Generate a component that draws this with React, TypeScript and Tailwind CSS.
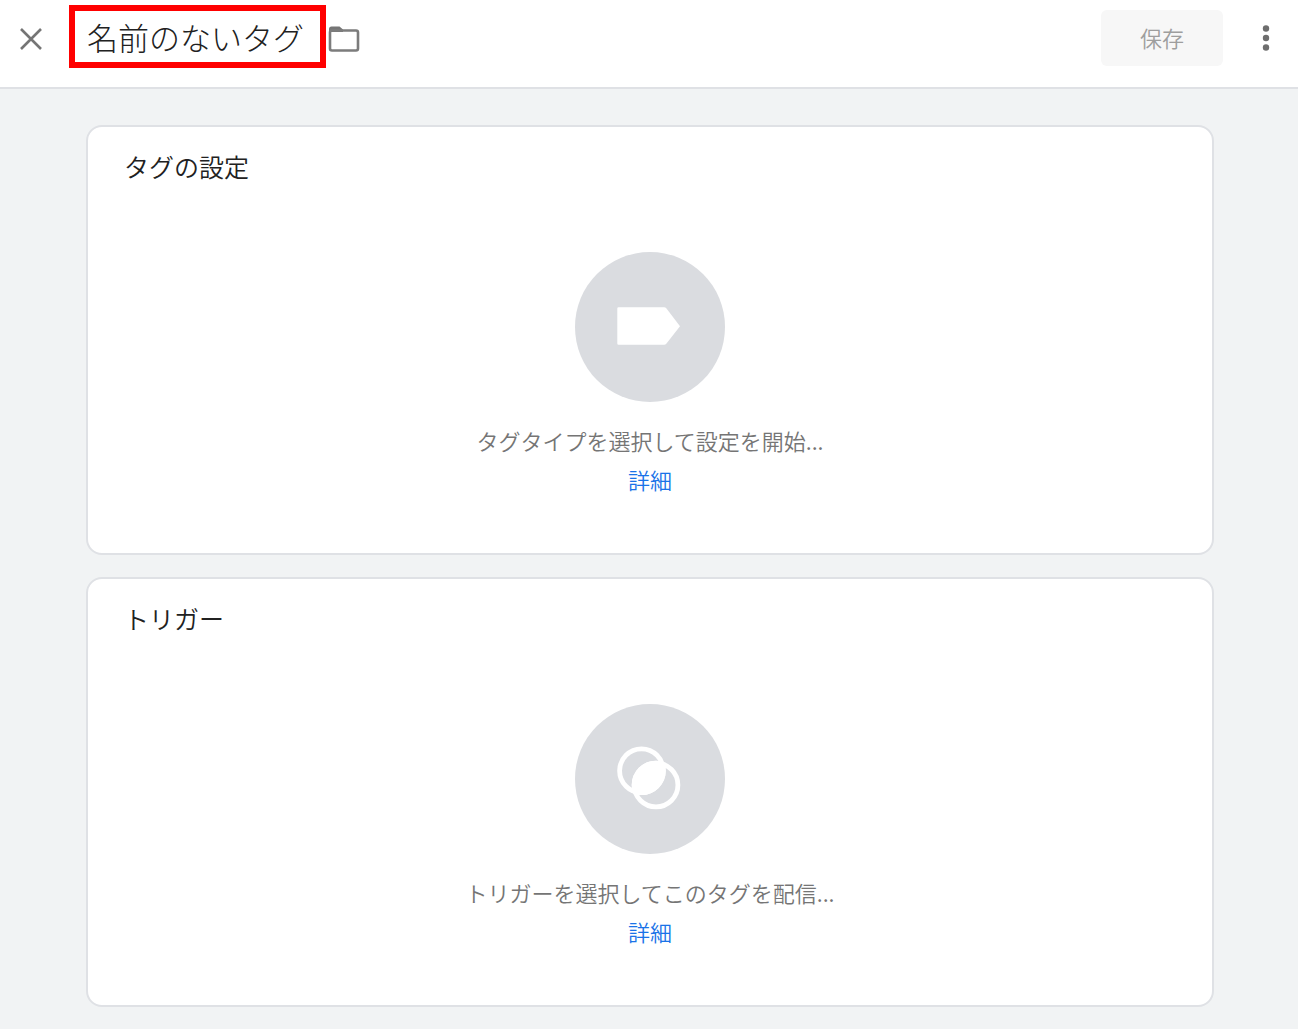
import type { ReactNode } from "react";

function CloseIcon() {
  return (
    <svg viewBox="0 0 22 22" className="size-[22px]" fill="none" stroke="#757575" strokeWidth="2.600" aria-hidden="true">
      <path d="M1 1 21 21M21 1 1 21" />
    </svg>
  );
}

function FolderIcon() {
  return (
    <svg viewBox="0 0 32 26" className="h-[26px] w-8" aria-hidden="true">
      <path d="M3.500 0.500H11.500L15 3.500V6H1V3Q1 0.500 3.500 0.500Z" fill="#757575" />
      <rect x="2" y="4.500" width="28" height="20" rx="2" fill="none" stroke="#7c7c7c" strokeWidth="2.600" />
    </svg>
  );
}

function MoreIcon() {
  return (
    <svg viewBox="0 0 8 26" className="h-[26px] w-2" fill="#6e6e6e" aria-hidden="true">
      <circle cx="4" cy="3.500" r="3.200" />
      <circle cx="4" cy="13" r="3.200" />
      <circle cx="4" cy="22.500" r="3.200" />
    </svg>
  );
}

function TagIcon() {
  return (
    <svg viewBox="0 0 150 150" className="size-full" aria-hidden="true">
      <path d="M43.500 55.300H89Q90.500 55.300 91.500 56.400L105 74.300 91.500 91.500Q90.500 92.800 89 92.800H43.500Q42.300 92.800 42.300 91.500V56.500Q42.300 55.300 43.500 55.300Z" fill="#fff" />
    </svg>
  );
}

function TriggerIcon() {
  return (
    <svg viewBox="0 0 150 150" className="size-full" fill="none" stroke="#fff" strokeWidth="4.800" aria-hidden="true">
      <defs>
        <clipPath id="trigger-overlap">
          <circle cx="66.500" cy="66.800" r="24.300" />
        </clipPath>
      </defs>
      <circle cx="66.500" cy="66.800" r="21.900" />
      <circle cx="81" cy="81" r="21.900" />
      <circle cx="81" cy="81" r="24.300" fill="#fff" stroke="none" clipPath="url(#trigger-overlap)" />
    </svg>
  );
}

type PanelProps = { title: string; hint: string; icon: ReactNode };

function Panel({ title, hint, icon }: PanelProps) {
  return (
    <section className="flex flex-col rounded-2xl border-2 border-[#dfe1e5] bg-white px-9 pt-[23px] pb-[54px]">
      <h2 className="text-[25px] leading-8 text-[#212121]">{title}</h2>
      <div className="mt-[70px] flex flex-col items-center text-[22px] leading-[39px]">
        <button type="button" aria-label={title} className="size-[150px] rounded-full bg-[#dadce0]">
          {icon}
        </button>
        <p className="mt-[19px] text-[#757575]">{hint}</p>
        <a href="#help" className="text-[#1a73e8]">詳細</a>
      </div>
    </section>
  );
}

export default function App() {
  return (
    <div className="min-h-screen bg-[#f1f3f4] font-['Noto_Sans_CJK_JP',sans-serif] font-[350]">
      <header className="flex h-[89px] items-start border-b-2 border-[#dfe1e5] bg-white pr-7 pl-5">
        <button type="button" aria-label="閉じる" className="mt-7">
          <CloseIcon />
        </button>
        <h1 className="mt-[5px] ml-[27px] flex h-[63px] items-center border-6 border-[#ff0000] pr-4 pl-3 text-[31px] leading-10 font-light whitespace-nowrap text-[#212121]">
          名前のないタグ
        </h1>
        <button type="button" aria-label="フォルダ" className="mt-[26px] ml-0.5">
          <FolderIcon />
        </button>
        <button type="button" disabled className="mt-2.5 ml-auto h-14 w-[122px] rounded-md bg-[#f7f7f7] pb-0.5 text-[22px] text-[#9e9e9e]">
          保存
        </button>
        <button type="button" aria-label="その他の操作" className="mt-[25px] ml-[39px]">
          <MoreIcon />
        </button>
      </header>
      <main className="flex flex-col gap-[22px] pt-9 pr-[84px] pb-[22px] pl-[86px]">
        <Panel title="タグの設定" hint="タグタイプを選択して設定を開始..." icon={<TagIcon />} />
        <Panel title="トリガー" hint="トリガーを選択してこのタグを配信..." icon={<TriggerIcon />} />
      </main>
    </div>
  );
}
